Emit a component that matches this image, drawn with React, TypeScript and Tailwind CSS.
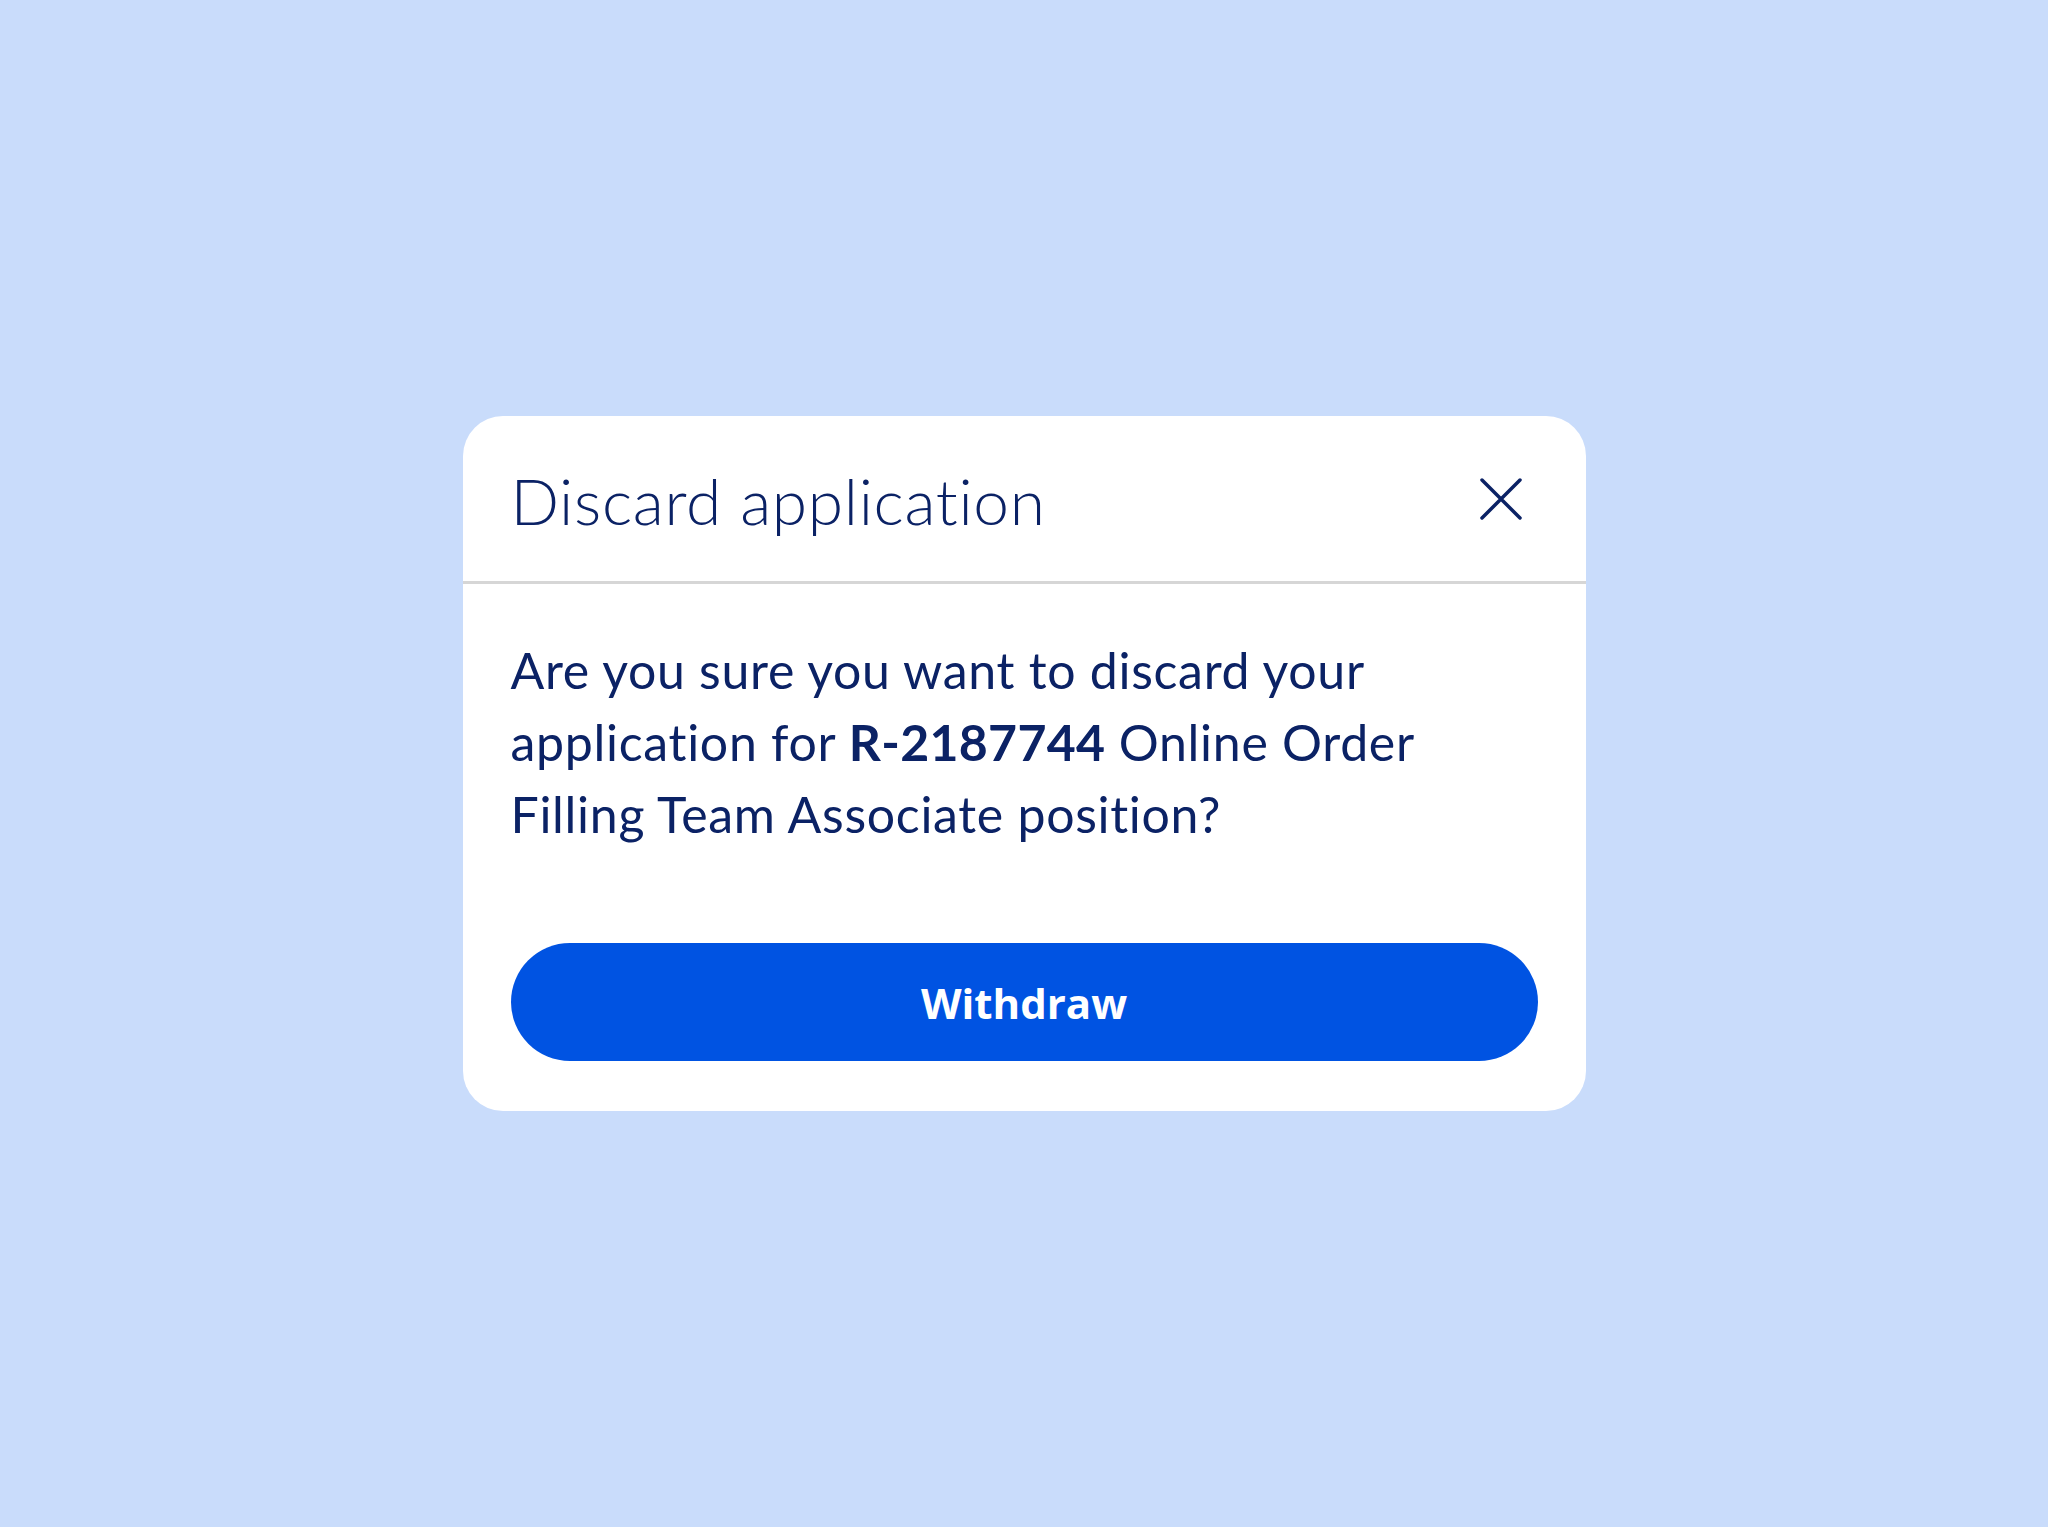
import React from "react";

export default function App() {
  return (
    <div className="min-h-[1527px] w-full bg-[#c9dcfb] flex items-center justify-center" style={{ fontFamily: "Lato, 'Open Sans', sans-serif" }}>
      <div className="w-[1123px] bg-white rounded-[40px] overflow-hidden">
        <div className="h-[168px] px-12 flex items-center justify-between border-b-[3px] border-[#d6d6d6]">
          <h1 className="text-[64px] font-light text-[#0b2265] tracking-[0.7px] leading-none pt-[4px]">Discard application</h1>
          <button className="w-[60px] h-[60px] flex items-center justify-center mr-[7px]" aria-label="Close">
            <svg width="44" height="44" viewBox="0 0 44 44" fill="none">
              <path d="M3 3 L41 41 M41 3 L3 41" stroke="#0b2265" strokeWidth="3.5" strokeLinecap="round" />
            </svg>
          </button>
        </div>
        <div className="px-12 pt-[50px] pb-[50px]">
          <p className="text-[50px] leading-[72px] text-[#0b2265] tracking-[0.7px]">
            Are you sure you want to discard your
            <br />
            application for <span className="font-bold tracking-[0.3px]">R-2187744</span> Online Order
            <br />
            Filling Team Associate position?
          </p>
          <button className="mt-[93px] w-full h-[118px] rounded-full bg-[#0053e2] text-white text-[42px] font-bold" style={{ fontFamily: "'Open Sans', sans-serif" }}>
            Withdraw
          </button>
        </div>
      </div>
    </div>
  );
}
